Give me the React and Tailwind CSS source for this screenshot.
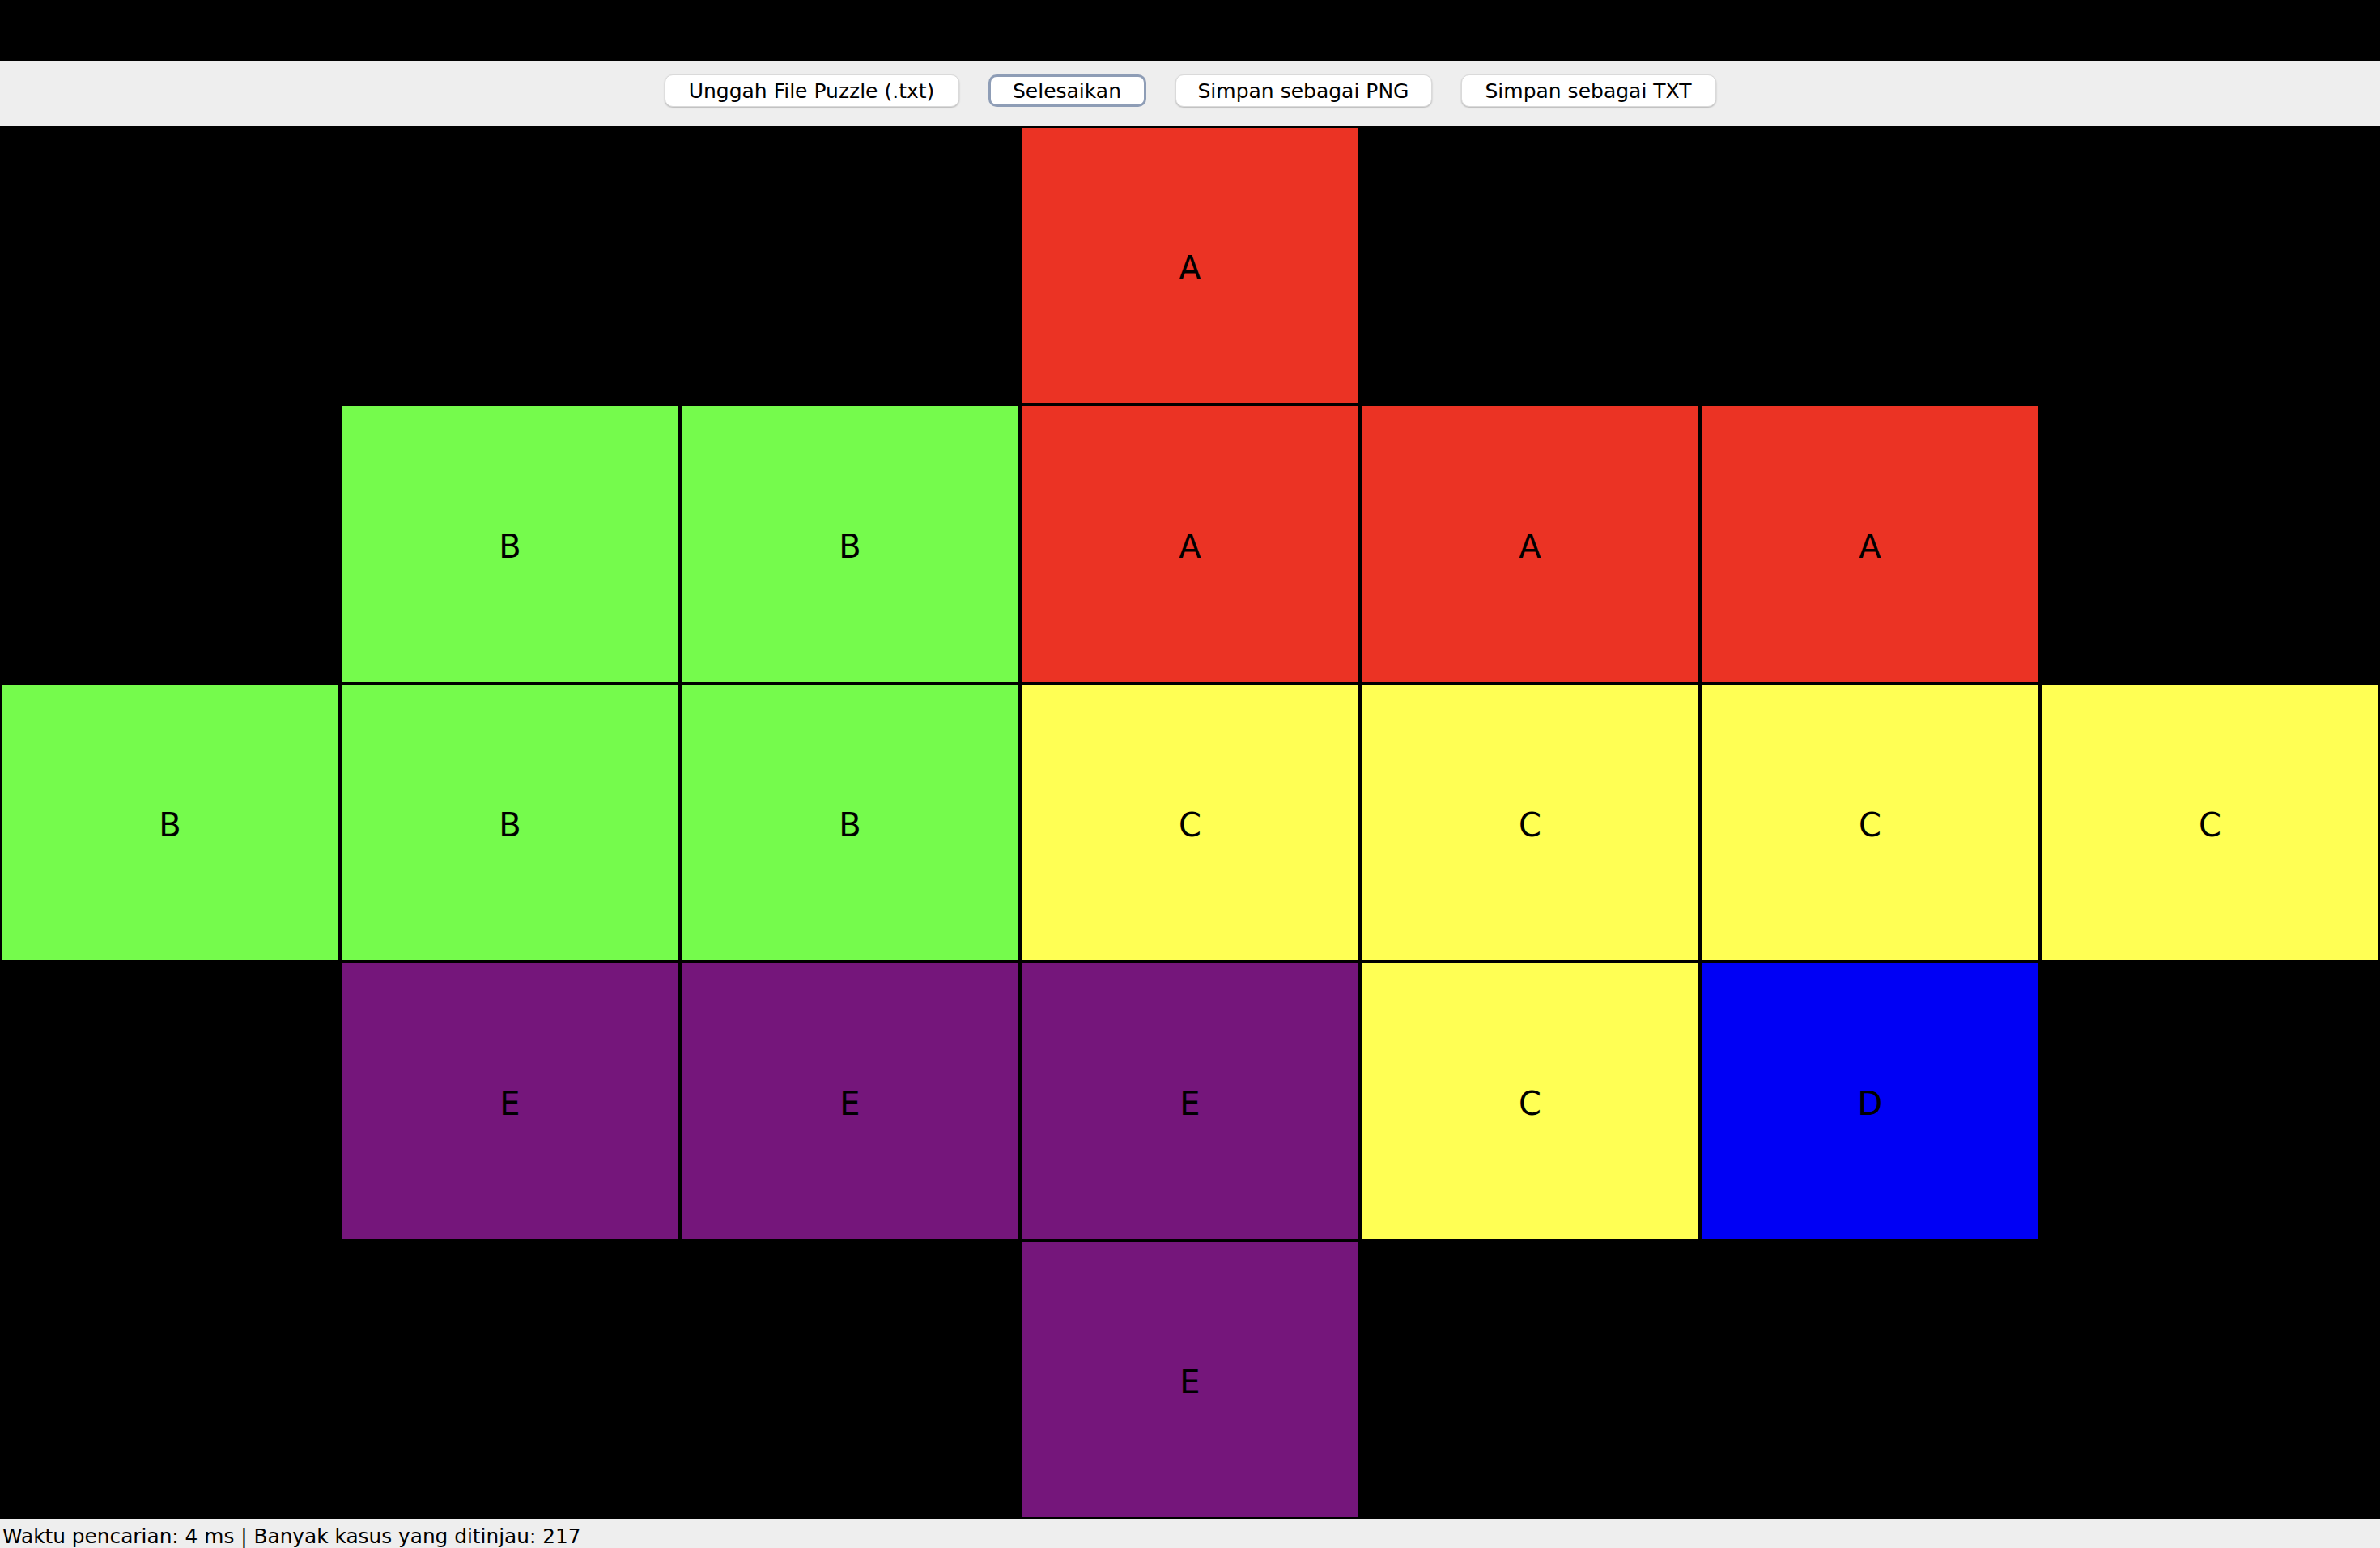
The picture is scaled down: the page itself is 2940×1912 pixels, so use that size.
const grid = [
  ['', '', '', 'A', '', '', ''],
  ['', 'B', 'B', 'A', 'A', 'A', ''],
  ['B', 'B', 'B', 'C', 'C', 'C', 'C'],
  ['', 'E', 'E', 'E', 'C', 'D', ''],
  ['', '', '', 'E', '', '', ''],
];

const colors = {
  A: 'bg-[#eb3324]',
  B: 'bg-[#75fb4c]',
  C: 'bg-[#ffff54]',
  D: 'bg-[#0000f5]',
  E: 'bg-[#75167b]',
};

function ToolButton({ children, width, focused }) {
  return (
    <button
      className={`${width} h-[40px] rounded-[10px] bg-white text-[25px] leading-none text-black flex items-center justify-center ${
        focused
          ? 'border-[3px] border-[#8e9db6]'
          : 'border border-[#dadada] shadow-[0_1px_2px_rgba(0,0,0,0.25)]'
      }`}
    >
      {children}
    </button>
  );
}

export default function App() {
  return (
    <div
      className="w-full h-[1912px] bg-black flex flex-col overflow-hidden"
      style={{ fontFamily: '"DejaVu Sans", "Liberation Sans", sans-serif' }}
    >
      <div className="h-[75px] shrink-0 bg-black" />

      <div className="h-[81px] shrink-0 bg-[#eeeeee] flex justify-center items-start pt-[17px] gap-[36px]">
        <ToolButton width="w-[364px]">Unggah File Puzzle (.txt)</ToolButton>
        <ToolButton width="w-[195px]" focused>
          Selesaikan
        </ToolButton>
        <ToolButton width="w-[317px]">Simpan sebagai PNG</ToolButton>
        <ToolButton width="w-[315px]">Simpan sebagai TXT</ToolButton>
      </div>

      <div className="h-[1720px] shrink-0 grid grid-cols-7 grid-rows-5">
        {grid.flatMap((row, r) =>
          row.map((cell, c) => (
            <div
              key={`${r}-${c}`}
              className={
                cell
                  ? `${colors[cell]} border-2 border-black flex items-center justify-center pt-[6px] text-[40px] leading-none text-black`
                  : 'bg-black'
              }
            >
              {cell}
            </div>
          ))
        )}
      </div>

      <div className="h-[36px] shrink-0 bg-[#eeeeee] overflow-hidden pl-[3px] pt-[4px] text-[24.8px] leading-[36px] text-black whitespace-nowrap">
        Waktu pencarian: 4 ms | Banyak kasus yang ditinjau: 217
      </div>
    </div>
  );
}
